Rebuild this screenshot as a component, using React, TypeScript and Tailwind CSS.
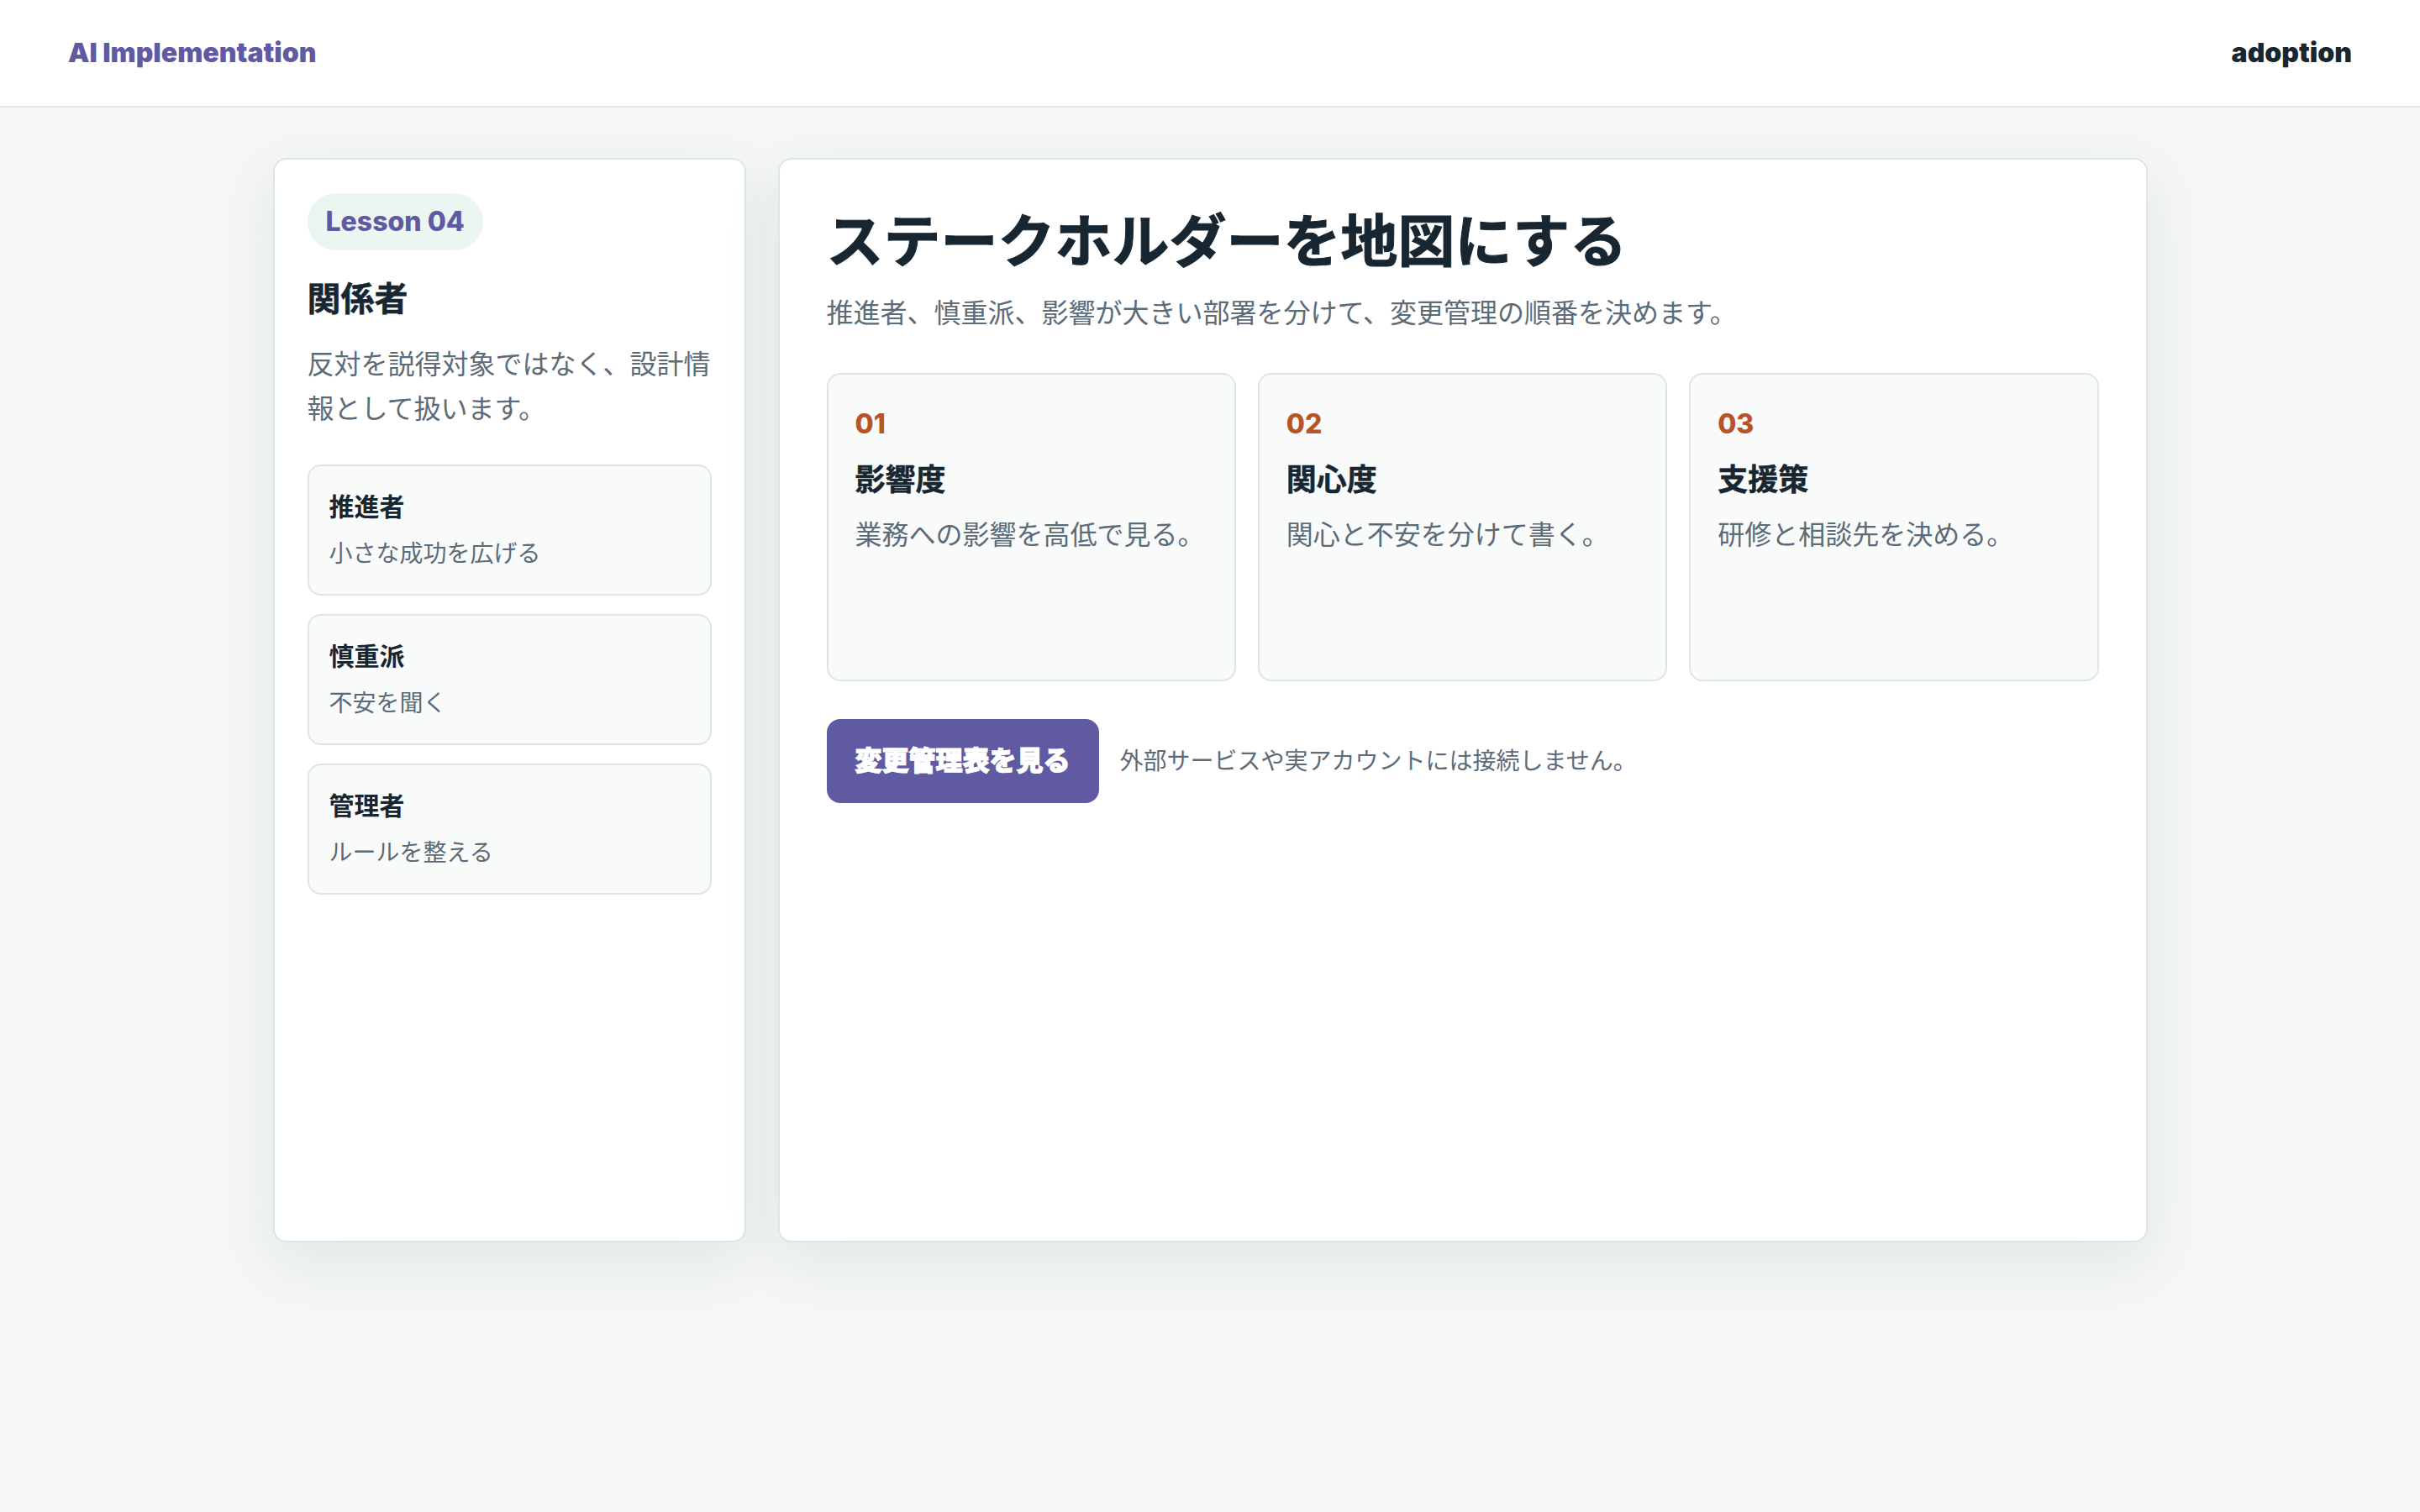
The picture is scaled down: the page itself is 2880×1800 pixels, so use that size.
import React from "react";

const stakeholders = [
  { name: "推進者", note: "小さな成功を広げる" },
  { name: "慎重派", note: "不安を聞く" },
  { name: "管理者", note: "ルールを整える" },
];

const steps = [
  { no: "01", title: "影響度", text: "業務への影響を高低で見る。" },
  { no: "02", title: "関心度", text: "関心と不安を分けて書く。" },
  { no: "03", title: "支援策", text: "研修と相談先を決める。" },
];

export default function App() {
  return (
    <div className="min-h-screen bg-[#f4f7f6] font-[Inter,'Noto_Sans_CJK_JP',sans-serif] text-[#172630]">
      <header className="flex h-[128px] items-center justify-between border-b-2 border-[#dbe5e6] bg-white px-[81px]">
        <span className="text-[32px] font-black text-[#5f5aa2]">AI Implementation</span>
        <span className="text-[32px] font-black text-[#172630]">adoption</span>
      </header>

      <main className="mx-auto mt-[60px] flex w-[2231px] gap-[38px]">
        {/* Lesson sidebar */}
        <aside className="h-[1291px] w-[563px] shrink-0 rounded-[16px] border-2 border-[#dce6ea] bg-white px-[39px] pt-[40px] shadow-[0_24px_70px_rgba(23,38,48,0.08)]">
          <div className="inline-flex h-[68px] items-center rounded-full bg-[#ebf5f2] px-[22px] text-[32px] font-extrabold text-[#5f5aa2]">
            Lesson 04
          </div>
          <h2 className="mt-[32px] text-[40px] leading-[52px] font-bold [-webkit-text-stroke:0.5px_#172630]">関係者</h2>
          <p className="mt-[25px] text-[32px] leading-[53px] text-[#5b6b78]">
            反対を説得対象ではなく、設計情報として扱います。
          </p>
          <div className="mt-[40px] flex flex-col gap-[22px]">
            {stakeholders.map((s) => (
              <div
                key={s.name}
                className="h-[156px] rounded-[16px] border-2 border-[#dce6ea] bg-[#f9fbfb] px-[24px] pt-[28px]"
              >
                <div className="text-[30px] leading-[40px] font-bold">{s.name}</div>
                <div className="mt-[16px] text-[28px] leading-[40px] text-[#5b6b78]">{s.note}</div>
              </div>
            ))}
          </div>
        </aside>

        {/* Main lesson panel */}
        <section className="h-[1291px] flex-1 rounded-[16px] border-2 border-[#dce6ea] bg-white p-[56px] pt-[57px] shadow-[0_24px_70px_rgba(23,38,48,0.08)]">
          <h1 className="text-[68px] leading-[80px] font-bold [-webkit-text-stroke:1px_#172630]">ステークホルダーを地図にする</h1>
          <p className="mt-[22px] text-[32px] leading-[48px] text-[#5b6b78]">
            推進者、慎重派、影響が大きい部署を分けて、変更管理の順番を決めます。
          </p>

          <div className="mt-[47px] grid grid-cols-3 gap-[26px]">
            {steps.map((s) => (
              <div
                key={s.no}
                className="h-[367px] rounded-[16px] border-2 border-[#dce6ea] bg-[#f9fbfb] px-[32px] pt-[32px]"
              >
                <div className="text-[32px] leading-[54px] font-extrabold text-[#b8542a]">{s.no}</div>
                <div className="mt-[15px] text-[36px] leading-[48px] font-bold [-webkit-text-stroke:0.5px_#172630]">{s.title}</div>
                <div className="mt-[18px] text-[32px] leading-[48px] text-[#5b6b78]">{s.text}</div>
              </div>
            ))}
          </div>

          <div className="mt-[45px] flex items-center gap-[25px]">
            <button className="flex h-[100px] items-center rounded-[16px] bg-[#5f5aa2] px-[34px] text-[32px] font-extrabold text-white [-webkit-text-stroke:1.2px_white]">
              変更管理表を見る
            </button>
            <span className="text-[28px] text-[#5b6b78]">外部サービスや実アカウントには接続しません。</span>
          </div>
        </section>
      </main>
    </div>
  );
}
